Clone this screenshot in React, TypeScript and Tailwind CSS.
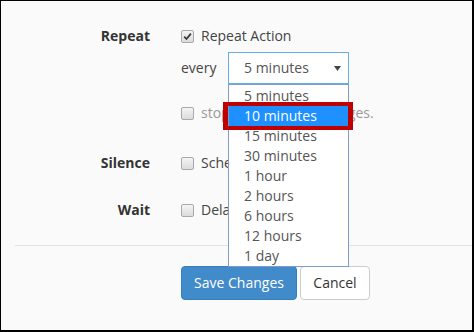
import React from "react";

const options = [
  "5 minutes",
  "10 minutes",
  "15 minutes",
  "30 minutes",
  "1 hour",
  "2 hours",
  "6 hours",
  "12 hours",
  "1 day",
];

function Checkbox({ checked }: { checked?: boolean }) {
  return (
    <span className="flex h-[13px] w-[13px] shrink-0 items-center justify-center rounded-[2px] border border-[#a9a9a9] bg-gradient-to-b from-[#f4f4f4] to-[#dcdcdc]">
      {checked && (
        <svg width="9" height="9" viewBox="0 0 9 9">
          <path d="M1.2 4.6 L3.5 7 L7.9 1.6" fill="none" stroke="#3a3a3a" strokeWidth="1.8" />
        </svg>
      )}
    </span>
  );
}

function Row({ label, children, className = "" }: { label?: string; children: React.ReactNode; className?: string }) {
  return (
    <div className={"flex items-center " + className}>
      <div className="w-[149px] text-right font-bold text-[#333]">{label}</div>
      <div className="ml-[31px] flex items-center">{children}</div>
    </div>
  );
}

export default function App() {
  return (
    <div className="h-[332px] w-[474px] overflow-hidden border-t border-l border-r-2 border-b-2 border-black bg-[#fafafa] font-['Open_Sans',sans-serif] text-[14px] leading-[20px] text-[#444]">
      <div className="pt-[25px]">
        <Row label="Repeat" className="h-[20px]">
          <Checkbox checked />
          <span className="ml-[7px]">Repeat Action</span>
        </Row>

        <Row className="mt-[6px] h-[32px]">
          <span className="w-[47px]">every</span>
          {/* open native-style select with its option list over the rows below */}
          <div className="relative z-10">
            <div className="flex h-[32px] w-[121px] items-center justify-between border border-[#66afe9] bg-white pl-[15px] pr-[7px] text-[#555]">
              <span>5 minutes</span>
              <svg width="7" height="5" viewBox="0 0 7 5">
                <path d="M0 0 H7 L3.5 5 Z" fill="#444" />
              </svg>
            </div>
            <ul className="absolute left-0 top-full w-[121px] border border-[#7f9bc9] bg-white pt-[1px] text-[#555]">
              {options.map((o) =>
                o === "10 minutes" ? (
                  <li key={o} className="relative bg-[#1e90ff] pl-[15px] text-white">
                    {o}
                    <span className="absolute -left-[6px] -right-[5px] -top-[4px] -bottom-[4px] border-x-[5px] border-y-4 border-[#c00000]" />
                  </li>
                ) : (
                  <li key={o} className="pl-[15px]">
                    {o}
                  </li>
                )
              )}
            </ul>
          </div>
        </Row>

        <Row className="mt-[19px] h-[20px]">
          <Checkbox />
          <span className="ml-[7px] text-[#999]">stop when status changes.</span>
        </Row>

        <Row label="Silence" className="mt-[30px] h-[20px]">
          <Checkbox />
          <span className="ml-[7px]">Schedule silence</span>
        </Row>

        <Row label="Wait" className="mt-[27px] h-[20px]">
          <Checkbox />
          <span className="ml-[7px]">Delay action</span>
        </Row>

        <div className="ml-[14px] mt-[25px] h-px bg-[#e3e3e3]" />

        <div className="ml-[180px] mt-[20px] flex gap-[3px]">
          <button className="h-[34px] w-[116px] rounded-[4px] border border-[#357ebd] bg-[#428bca] text-white">
            Save Changes
          </button>
          <button className="h-[34px] w-[70px] rounded-[4px] border border-[#ccc] bg-white text-[#333]">
            Cancel
          </button>
        </div>
      </div>
    </div>
  );
}
